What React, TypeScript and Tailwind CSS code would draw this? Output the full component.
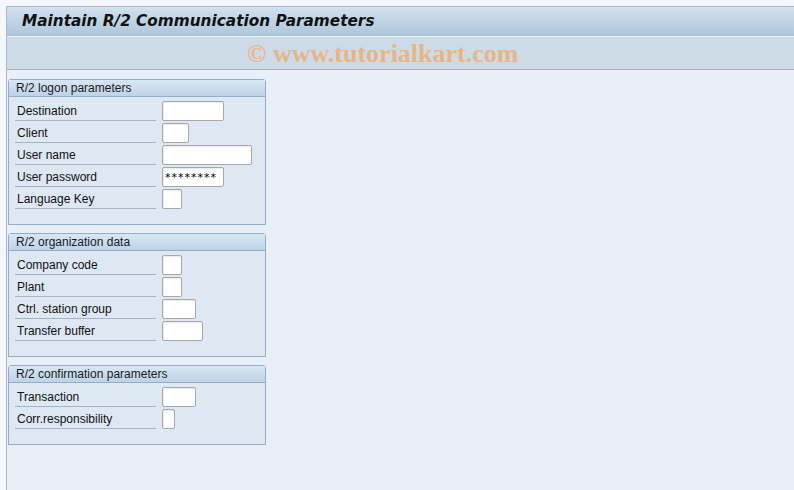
import React from "react";

type Row = { label: string; w: number; value?: string };

const groups: { title: string; rows: Row[] }[] = [
  {
    title: "R/2 logon parameters",
    rows: [
      { label: "Destination", w: 62 },
      { label: "Client", w: 27 },
      { label: "User name", w: 90 },
      { label: "User password", w: 62, value: "********" },
      { label: "Language Key", w: 20 },
    ],
  },
  {
    title: "R/2 organization data",
    rows: [
      { label: "Company code", w: 20 },
      { label: "Plant", w: 20 },
      { label: "Ctrl. station group", w: 34 },
      { label: "Transfer buffer", w: 41 },
    ],
  },
  {
    title: "R/2 confirmation parameters",
    rows: [
      { label: "Transaction", w: 34 },
      { label: "Corr.responsibility", w: 13 },
    ],
  },
];

function Group({ title, rows }: { title: string; rows: Row[] }) {
  return (
    <div className="w-[258px] border border-[#95abc6] rounded-t-[3px] bg-[#dde8f3]">
      <div className="h-[17px] bg-gradient-to-b from-[#d9e7f4] to-[#bdd3e9] border-b border-[#95abc6] px-[7px] text-[12px] leading-[17px] text-[#1a1a1a]">
        {title}
      </div>
      <div className="pt-[4px] pb-[15px] pl-[6px] flex flex-col gap-[2px]">
        {rows.map((r) => (
          <div key={r.label} className="flex items-center h-[20px]">
            <div className="w-[141px] h-[20px] border-b border-[#a4b4c6] pl-[2px] text-[12px] leading-[20px] text-[#111]">
              {r.label}
            </div>
            <div
              className="ml-[6px] h-[20px] bg-white border border-[#a8a8a8] rounded-[2px] shadow-[inset_1px_1px_1px_rgba(0,0,0,0.08)] text-[11px] leading-[19px] pl-[2px] text-black tracking-[1px] font-['DejaVu_Sans',sans-serif]"
              style={{ width: r.w }}
            >
              {r.value}
            </div>
          </div>
        ))}
      </div>
    </div>
  );
}

export default function App() {
  return (
    <div className="w-[794px] h-[490px] bg-[#f4f7fb] pt-[6px] pl-[6px] font-['Liberation_Sans',Arial,sans-serif] overflow-hidden">
      <div className="h-full border-l border-t border-[#a9b8cc] bg-[#e8eff7] flex flex-col">
        <div className="h-[30px] bg-gradient-to-b from-[#d1e1ee] to-[#adc5dc] border-b border-[#e9f0f6] flex items-center pl-[15px]">
          <span className="font-['DejaVu_Sans',sans-serif] font-bold italic text-[15.3px] text-[#111]">
            Maintain R/2 Communication Parameters
          </span>
        </div>
        <div className="h-[33px] bg-[#cddbe6] border-b border-[#a6b5c6] flex items-center pl-[240px]">
          <span className="font-['Liberation_Serif',serif] font-bold text-[26px] text-[#e9b585]">
            © www.tutorialkart.com
          </span>
        </div>
        <div className="pt-[9px] pl-[1px] flex flex-col gap-[8px]">
          {groups.map((g) => (
            <Group key={g.title} title={g.title} rows={g.rows} />
          ))}
        </div>
      </div>
    </div>
  );
}
